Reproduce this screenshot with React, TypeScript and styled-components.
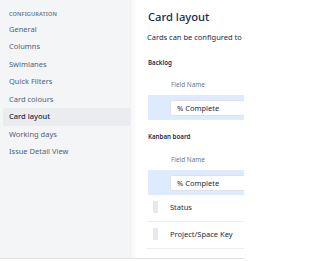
import React from 'react';
import styled, { createGlobalStyle } from 'styled-components';

const GlobalStyle = createGlobalStyle`
  html, body {
    margin: 0;
    padding: 0;
    background: #ffffff;
  }
  body {
    font-family: 'Noto Sans', 'Liberation Sans', sans-serif;
    color: #172b4d;
    -webkit-font-smoothing: antialiased;
  }
`;

const Page = styled.div`
  display: flex;
  width: 244px;
  height: 258px;
  border-bottom: 1px solid #dfe1e6;
  overflow: hidden;
`;

const Sidebar = styled.nav`
  flex: 0 0 130px;
  background: #f4f5f7;
  padding-top: 10px;
  box-sizing: border-box;
`;

const SideHeading = styled.div`
  padding-left: 9px;
  height: 9px;
  line-height: 9px;
  margin-bottom: 1.5px;
  font-size: 5.6px;
  font-weight: 600;
  letter-spacing: 0.1px;
  color: #6b778c;
  text-transform: uppercase;
`;

const SideList = styled.ul`
  list-style: none;
  margin: 0;
  padding: 0 0 0 3px;
`;

const SideItem = styled.li<{ $active?: boolean }>`
  height: 17.5px;
  line-height: 17.5px;
  padding-left: 6px;
  font-size: 7.5px;
  color: ${({ $active }) => ($active ? '#172b4d' : '#505f79')};
  font-weight: ${({ $active }) => ($active ? 500 : 400)};
  background: ${({ $active }) => ($active ? '#ebecf0' : 'transparent')};
  border-radius: 2px 0 0 2px;
  white-space: nowrap;
`;

const Gutter = styled.div`
  flex: 0 0 7px;
  background: linear-gradient(90deg, #f7f8f9 0%, #fbfbfc 60%, #ffffff 100%);
  border-left: 1px solid #eef0f2;
  box-sizing: border-box;
`;

const Main = styled.main`
  flex: 1;
  min-width: 0;
  padding-left: 10px;
  overflow: hidden;
`;

const Content = styled.div`
  width: 360px;
`;

const Title = styled.h1`
  margin: 9px 0 0 1px;
  height: 16px;
  line-height: 16px;
  font-size: 11.2px;
  font-weight: 500;
  color: #172b4d;
`;

const Description = styled.p`
  margin: 6.5px 0 0 0;
  height: 11px;
  line-height: 11px;
  font-size: 7.5px;
  color: #172b4d;
  white-space: nowrap;
`;

const SectionLabel = styled.h2<{ $gap: number }>`
  margin: ${({ $gap }) => $gap}px 0 0 1px;
  height: 10px;
  line-height: 10px;
  font-size: 6.2px;
  font-weight: 600;
  color: #172b4d;
`;

const ColumnHeader = styled.div`
  margin: 12.5px 0 0 0;
  padding-left: 24px;
  height: 10px;
  line-height: 10px;
  font-size: 6.4px;
  color: #6b778c;
`;

const FieldRow = styled.div`
  margin-top: 5px;
  margin-left: 1px;
  height: 25px;
  background: #deebff;
  padding: 5px 0 0 22px;
  box-sizing: border-box;
`;

const FieldInput = styled.div`
  height: 16px;
  line-height: 15px;
  padding-left: 6px;
  background: #ffffff;
  border: 1px solid #dfe1e6;
  border-radius: 2px;
  box-sizing: border-box;
  font-size: 7.5px;
  color: #172b4d;
`;

const FieldList = styled.div`
  margin-left: 0;
`;

const ListRow = styled.div`
  display: flex;
  align-items: center;
  height: 25px;
  border-bottom: 1px solid #ebecf0;
  padding-bottom: 1px;
`;

const DragHandle = styled.span`
  flex: 0 0 5px;
  height: 12px;
  margin: 0 12px 0 6px;
  background-image: radial-gradient(circle, #d5d9e0 0.6px, transparent 0.8px);
  background-size: 2px 2px;
  background-color: #f4f5f7;
`;

const ListText = styled.span`
  font-size: 7.5px;
  color: #172b4d;
  white-space: nowrap;
`;

const navItems = [
  'General',
  'Columns',
  'Swimlanes',
  'Quick Filters',
  'Card colours',
  'Card layout',
  'Working days',
  'Issue Detail View',
];

export default function App() {
  return (
    <>
      <GlobalStyle />
      <Page>
        <Sidebar>
          <SideHeading>Configuration</SideHeading>
          <SideList>
            {navItems.map((item) => (
              <SideItem key={item} $active={item === 'Card layout'}>
                {item}
              </SideItem>
            ))}
          </SideList>
        </Sidebar>
        <Gutter />
        <Main>
          <Content>
            <Title>Card layout</Title>
            <Description>
              Cards can be configured to show up to three extra fields.
            </Description>

            <SectionLabel $gap={15}>Backlog</SectionLabel>
            <ColumnHeader>Field Name</ColumnHeader>
            <FieldRow>
              <FieldInput>% Complete</FieldInput>
            </FieldRow>

            <SectionLabel $gap={12}>Kanban board</SectionLabel>
            <ColumnHeader>Field Name</ColumnHeader>
            <FieldRow>
              <FieldInput>% Complete</FieldInput>
            </FieldRow>
            <FieldList>
              {['Status', 'Project/Space Key'].map((f) => (
                <ListRow key={f}>
                  <DragHandle />
                  <ListText>{f}</ListText>
                </ListRow>
              ))}
            </FieldList>
          </Content>
        </Main>
      </Page>
    </>
  );
}
